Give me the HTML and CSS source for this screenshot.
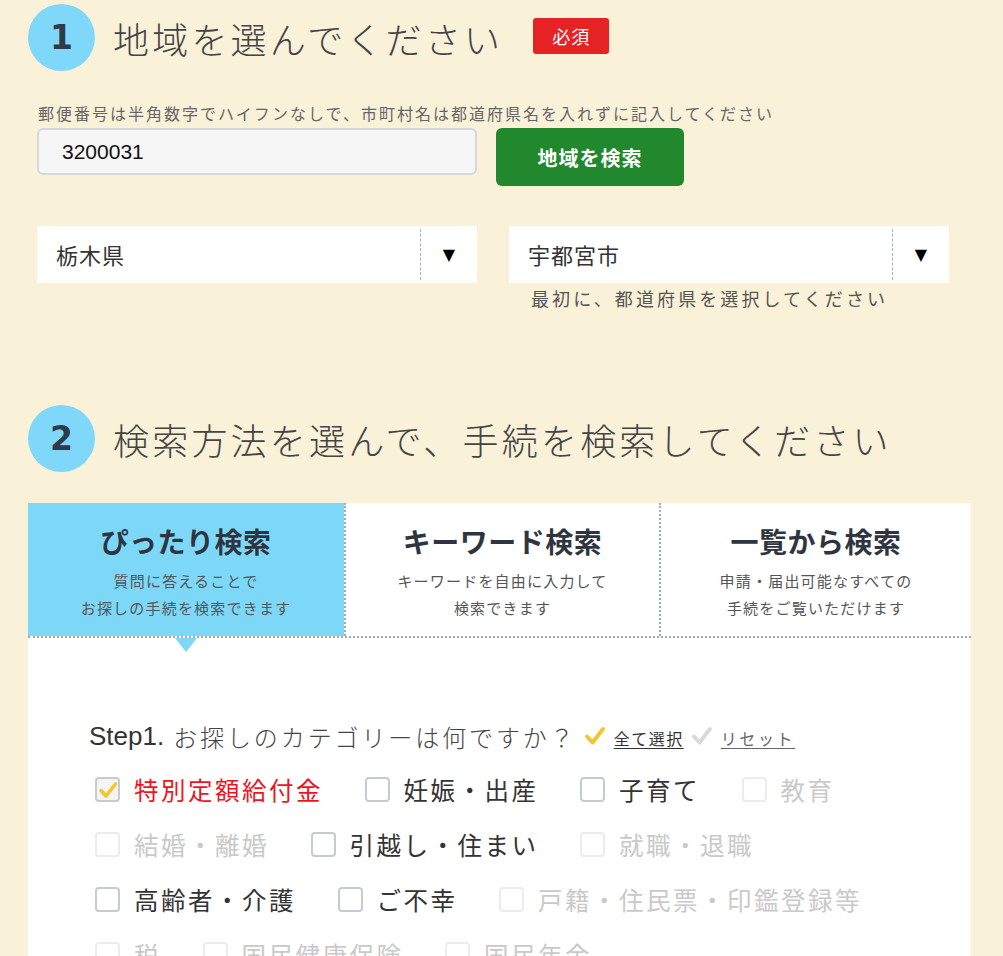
FILE: index.html
```html
<!DOCTYPE html>
<html lang="ja">
<head>
<meta charset="utf-8">
<title>手続検索</title>
<link rel="stylesheet" href="styles.css">
</head>
<body>
<div class="page">
  <section class="sec sec1">
    <div class="sec-head">
      <div class="num">1</div>
      <h2 class="title title1">地域を選んでください</h2>
      <span class="badge">必須</span>
    </div>
    <p class="hint">郵便番号は半角数字でハイフンなしで、市町村名は都道府県名を入れずに記入してください</p>
    <div class="zip-row">
      <div class="zip-input">3200031</div>
      <button class="zip-btn">地域を検索</button>
    </div>
    <div class="select-row">
      <div class="select-col">
        <div class="select"><span class="sel-text">栃木県</span><span class="sel-arrow">▼</span></div>
      </div>
      <div class="select-col">
        <div class="select"><span class="sel-text">宇都宮市</span><span class="sel-arrow">▼</span></div>
        <p class="sel-help">最初に、都道府県を選択してください</p>
      </div>
    </div>
  </section>

  <section class="sec sec2">
    <div class="sec-head">
      <div class="num">2</div>
      <h2 class="title title2">検索方法を選んで、手続を検索してください</h2>
    </div>
    <div class="panel">
      <div class="tabs">
        <div class="tab active">
          <div class="tab-title">ぴったり検索</div>
          <div class="tab-sub">質問に答えることで<br>お探しの手続を検索できます</div>
        </div>
        <div class="tab">
          <div class="tab-title">キーワード検索</div>
          <div class="tab-sub">キーワードを自由に入力して<br>検索できます</div>
        </div>
        <div class="tab">
          <div class="tab-title">一覧から検索</div>
          <div class="tab-sub">申請・届出可能なすべての<br>手続をご覧いただけます</div>
        </div>
      </div>
      <div class="panel-body">
        <div class="step">
          <span class="step-no">Step1.</span>
          <span class="step-q">お探しのカテゴリーは何ですか？</span>
          <svg class="chk-icon" viewBox="0 0 22 20" width="22" height="20"><path d="M3 10.5 L8.5 16.5 L19 3" fill="none" stroke="#f5c431" stroke-width="4" stroke-linecap="round" stroke-linejoin="round"/></svg>
          <a class="step-link">全て選択</a>
          <svg class="chk-icon" viewBox="0 0 22 20" width="22" height="20"><path d="M3 10.5 L8.5 16.5 L19 3" fill="none" stroke="#d6dadf" stroke-width="4" stroke-linecap="round" stroke-linejoin="round"/></svg>
          <a class="step-link reset">リセット</a>
        </div>
        <ul class="cats">
          <li class="cat checked"><span class="box"><svg viewBox="0 0 24 24" width="24" height="24"><path d="M5 12.5 L10 18 L19.5 6" fill="none" stroke="#f5c431" stroke-width="3.6" stroke-linecap="round" stroke-linejoin="round"/></svg></span><span class="lbl">特別定額給付金</span></li>
          <li class="cat"><span class="box"></span><span class="lbl">妊娠・出産</span></li>
          <li class="cat"><span class="box"></span><span class="lbl">子育て</span></li>
          <li class="cat off"><span class="box"></span><span class="lbl">教育</span></li>
          <li class="cat off"><span class="box"></span><span class="lbl">結婚・離婚</span></li>
          <li class="cat"><span class="box"></span><span class="lbl">引越し・住まい</span></li>
          <li class="cat off"><span class="box"></span><span class="lbl">就職・退職</span></li>
          <li class="cat"><span class="box"></span><span class="lbl">高齢者・介護</span></li>
          <li class="cat"><span class="box"></span><span class="lbl">ご不幸</span></li>
          <li class="cat off"><span class="box"></span><span class="lbl">戸籍・住民票・印鑑登録等</span></li>
          <li class="cat off"><span class="box"></span><span class="lbl">税</span></li>
          <li class="cat off"><span class="box"></span><span class="lbl">国民健康保険</span></li>
          <li class="cat off"><span class="box"></span><span class="lbl">国民年金</span></li>
        </ul>
      </div>
    </div>
  </section>
</div>
</body>
</html>
```

FILE: styles.css
```css
* { box-sizing: border-box; }
html, body { margin: 0; padding: 0; }
body {
  background: #faf1d9;
  font-family: "Noto Sans CJK JP", "Noto Sans", sans-serif;
  color: #333;
}
.page {
  padding: 4px 32px 0 28px;
}
.sec-head {
  display: flex;
  align-items: center;
  height: 67px;
}
.num {
  width: 67px;
  height: 67px;
  border-radius: 50%;
  background: #7fd8f9;
  color: #2f3a4a;
  font-family: "DejaVu Sans", sans-serif;
  font-weight: bold;
  font-size: 33px;
  display: flex;
  align-items: center;
  justify-content: center;
  flex: none;
}
.title {
  margin: 0 0 0 18px;
  font-weight: 200;
  font-size: 36px;
  color: #444;
  line-height: 1;
  letter-spacing: 3.2px;
}
.badge {
  margin-left: 30px;
  margin-top: -4px;
  background: #e52224;
  color: #fff;
  font-size: 18px;
  line-height: 36px;
  height: 36px;
  padding: 0 19px;
  border-radius: 3px;
  letter-spacing: 1px;
}
.hint {
  margin: 32px 0 0 10px;
  font-size: 16px;
  line-height: 20px;
  letter-spacing: 2px;
  color: #666;
}
.zip-row {
  display: flex;
  align-items: flex-start;
  gap: 19px;
  margin: 5px 0 0 9px;
}
.zip-input {
  width: 440px;
  height: 47px;
  background: #f5f6f5;
  border: 2px solid #d4d8dd;
  border-radius: 6px;
  padding-left: 23px;
  font-family: "Liberation Sans", sans-serif;
  font-size: 21px;
  line-height: 43px;
  color: #111;
}
.zip-btn {
  width: 188px;
  height: 58px;
  background: #21882d;
  border: none;
  border-radius: 6px;
  color: #fff;
  font-family: "Noto Sans CJK JP", sans-serif;
  font-weight: bold;
  font-size: 20px;
  letter-spacing: 1px;
}
.select-row {
  display: flex;
  gap: 32px;
  margin: 40px 0 0 9px;
}
.select-col { width: 440px; }
.select {
  display: flex;
  height: 57px;
  background: #fff;
  align-items: stretch;
}
.sel-text {
  flex: 1;
  padding-left: 19px;
  font-size: 22px;
  line-height: 57px;
  letter-spacing: 1px;
  color: #333;
}
.sel-arrow {
  width: 57px;
  margin: 3px 0;
  border-left: 1px dashed #aab3bc;
  display: flex;
  align-items: center;
  justify-content: center;
  font-family: "DejaVu Sans", sans-serif;
  font-size: 16px;
  color: #000;
}
.sel-help {
  margin: 4px 0 0 22px;
  font-size: 18px;
  line-height: 22px;
  letter-spacing: 3.1px;
  color: #555;
}
.sec2 { margin-top: 96px; }
.panel {
  margin-top: 31px;
  width: 943px;
  background: #fff;
  min-height: 500px;
}
.tabs {
  display: grid;
  grid-template-columns: 316px 315px 312px;
  border-bottom: 2px dotted #a4abb3;
  position: relative;
}
.tab {
  height: 133px;
  padding-top: 19px;
  text-align: center;
  border-left: 2px dotted #a4abb3;
  position: relative;
}
.tab:first-child { border-left: none; }
.tab.active { background: #7dd8f8; }
.tab.active::after {
  content: "";
  position: absolute;
  left: 50%;
  bottom: -16px;
  margin-left: -11px;
  border-left: 11px solid transparent;
  border-right: 11px solid transparent;
  border-top: 14px solid #7dd8f8;
}
.tab-title {
  font-weight: bold;
  font-size: 28px;
  line-height: 38px;
  color: #2f3540;
  letter-spacing: 0.5px;
}
.tab-sub {
  margin-top: 7px;
  font-size: 15px;
  line-height: 27px;
  letter-spacing: 1.2px;
  color: #555;
}
.panel-body {
  padding: 80px 61px 0 61px;
}
.step {
  display: flex;
  align-items: center;
  height: 36px;
}
.step-no {
  font-family: "Liberation Sans", sans-serif;
  font-size: 26px;
  color: #333;
  margin-right: 9px;
}
.step-q {
  font-size: 24px;
  font-weight: 300;
  letter-spacing: 2.9px;
  color: #444;
  margin-right: 7px;
}
.chk-icon { margin: 0 8px 0 0; flex: none; }
.step-link {
  font-size: 16px;
  letter-spacing: 1.5px;
  color: #333;
  text-decoration: underline;
  text-underline-offset: 3px;
  margin-right: 7px;
  margin-top: 4px;
}
.step-link.reset { color: #666; letter-spacing: 2.6px; }
.cats {
  list-style: none;
  margin: 8px 0 0 0;
  padding: 0 0 0 6px;
  display: flex;
  flex-wrap: wrap;
  column-gap: 44px;
}
.cat {
  display: flex;
  align-items: center;
  height: 55px;
}
.box {
  width: 25px;
  height: 25px;
  border: 2px solid #c6cbd1;
  border-radius: 4px;
  margin-right: 14px;
  background: #fff;
  position: relative;
  flex: none;
}
.box svg { position: absolute; left: -1px; top: -1px; }
.checked .box { background: #f4f4f4; }
.lbl {
  font-size: 24.5px;
  letter-spacing: 2.5px;
  margin-right: -2.5px;
  color: #333;
  white-space: nowrap;
}
.checked .lbl { color: #f2121e; }
.off .box { border-color: #ececec; }
.off .lbl { color: #c9c9c9; }
```
